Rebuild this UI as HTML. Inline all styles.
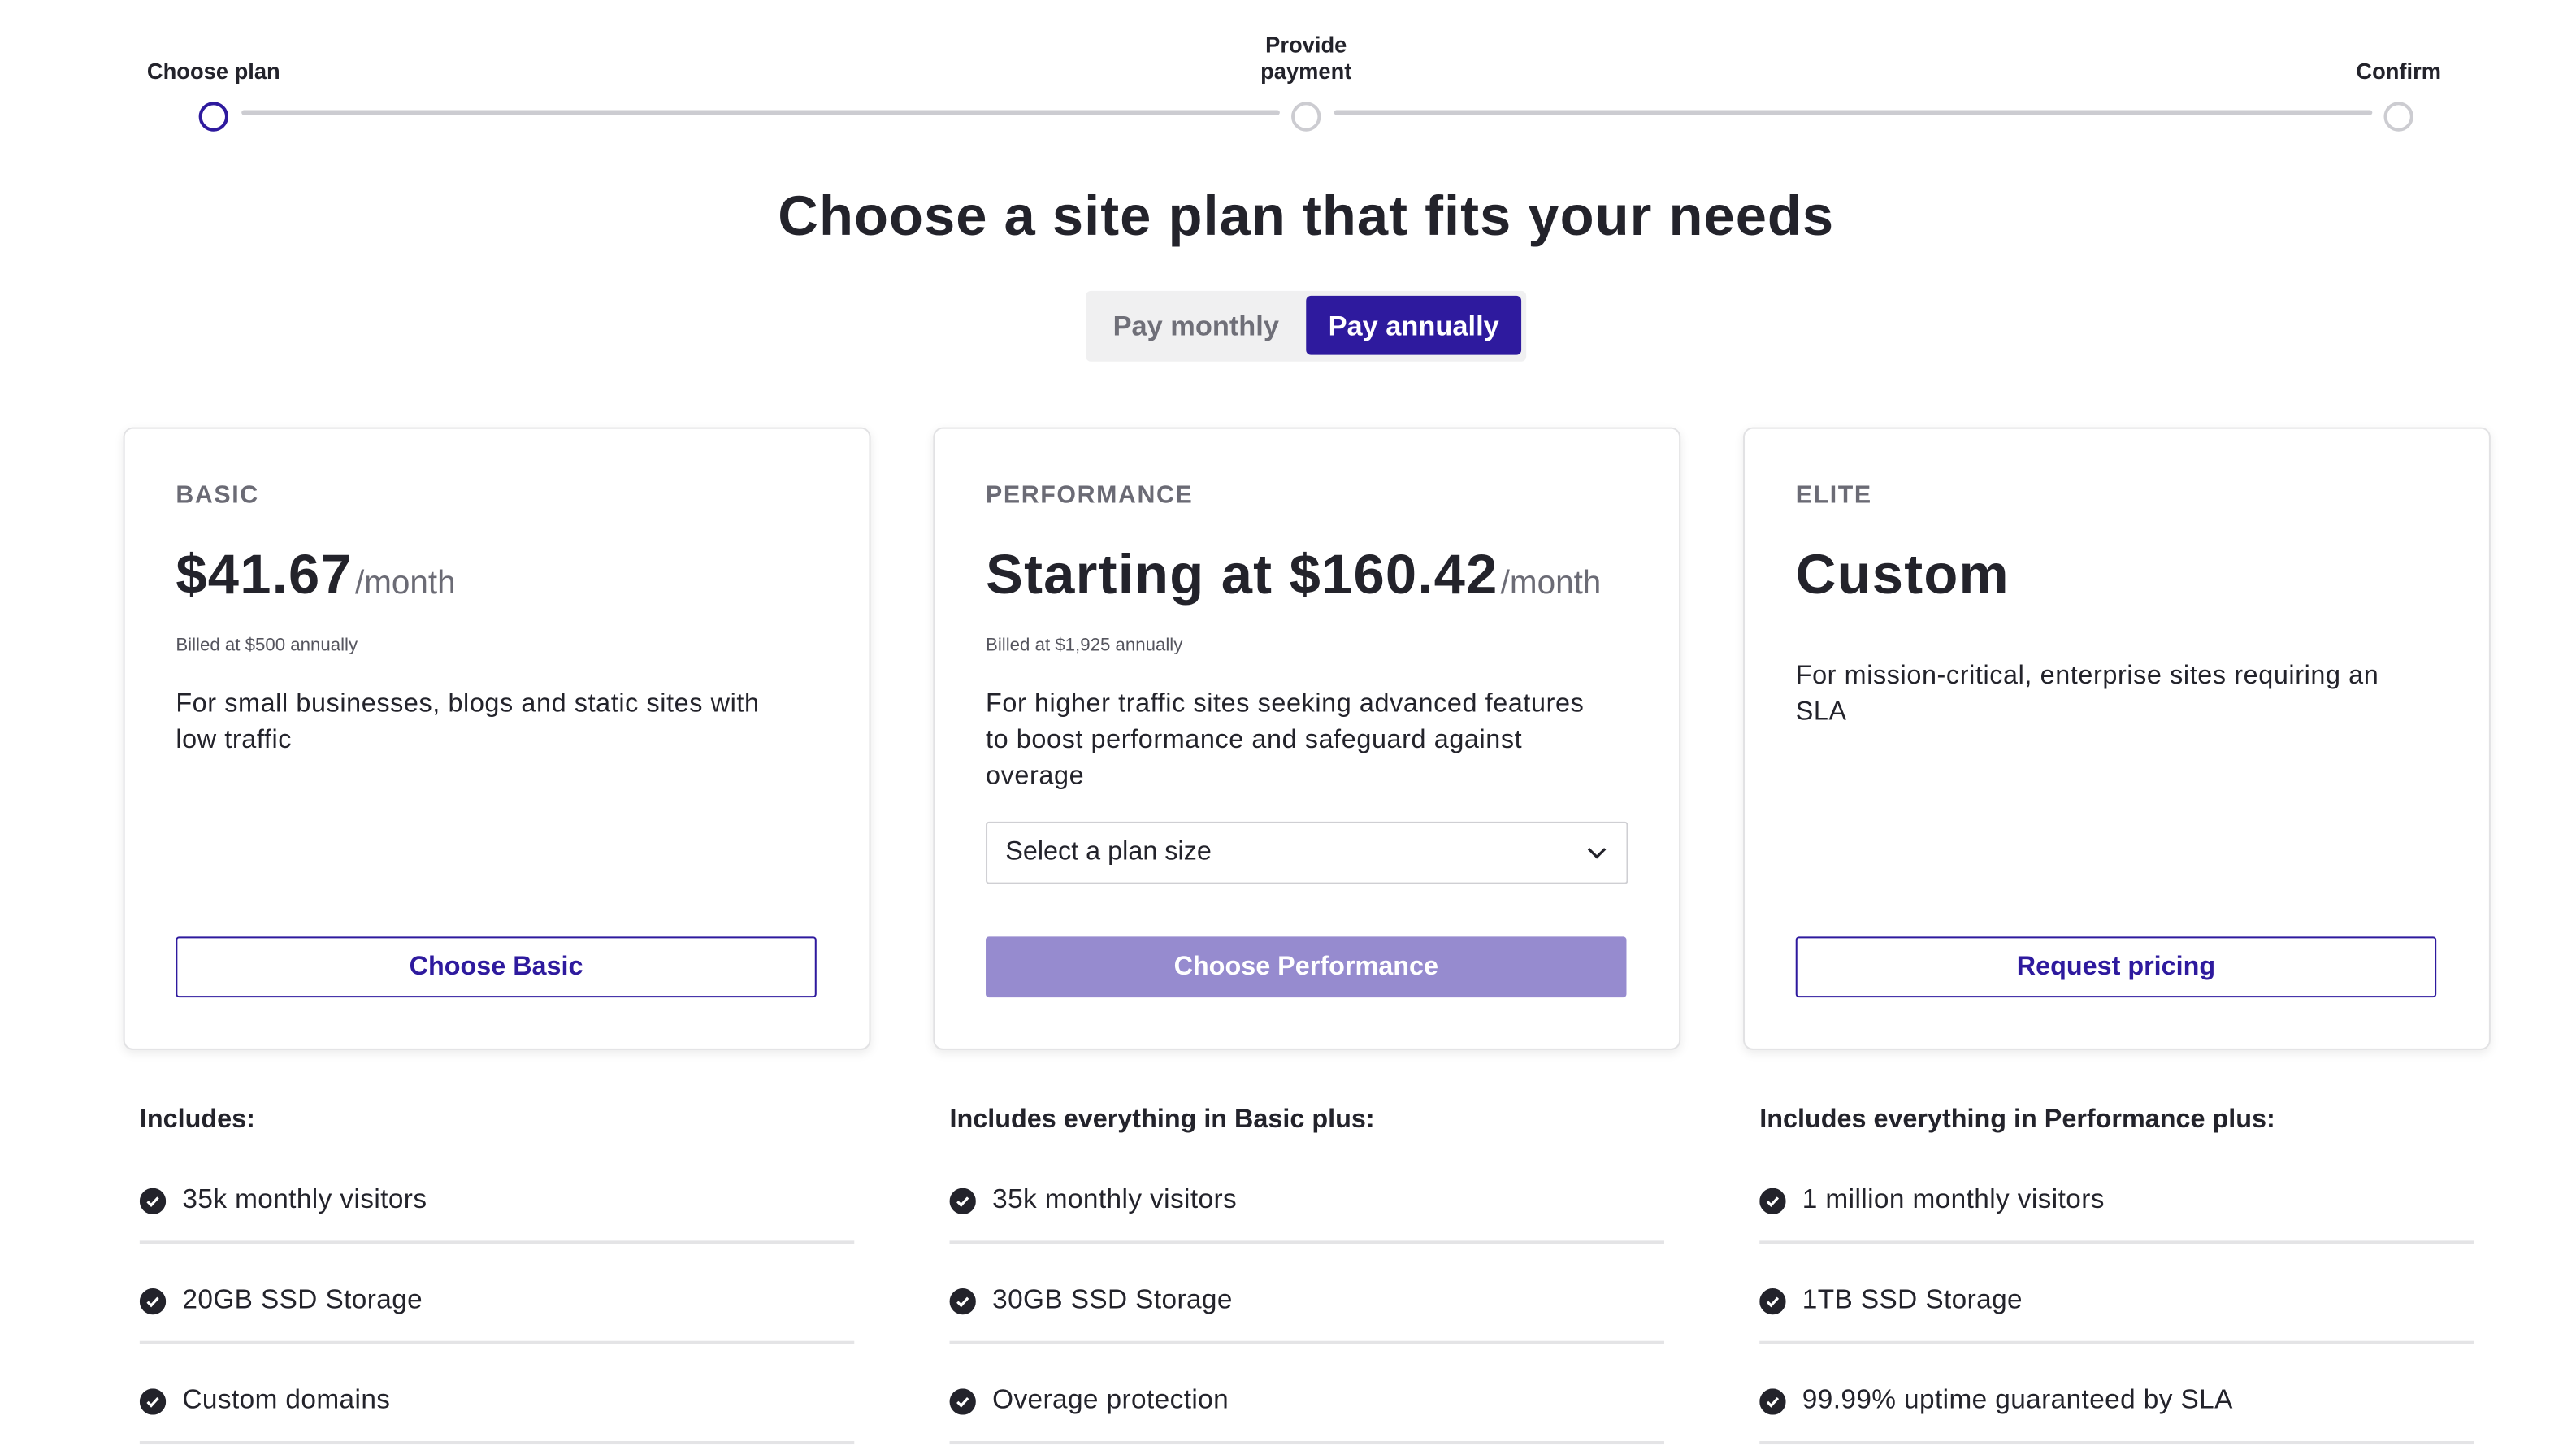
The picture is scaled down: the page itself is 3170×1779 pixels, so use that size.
<!DOCTYPE html>
<html><head><meta charset="utf-8"><style>
html,body{margin:0;padding:0;background:#fff;width:3170px;height:1778px;overflow:hidden}
#w{position:absolute;left:0;top:0;width:1568px;height:880px;transform:scale(2.0217);transform-origin:0 0;font-family:"Liberation Sans",sans-serif;color:#23232b}
.a{position:absolute;white-space:nowrap}
.lbl{font-size:13.5px;font-weight:bold;text-align:center;line-height:16px}
.circ{position:absolute;width:14px;height:14px;border-radius:50%;border:2.5px solid #ccccd1;background:#fff}
.line{position:absolute;height:3px;background:#ccccd1;border-radius:2px;top:67px}
.card{position:absolute;top:260px;width:453px;height:377px;border:1.5px solid #e2e2e4;border-radius:6px;box-shadow:0 2px 6px rgba(0,0,0,.08);background:#fff}
.tier{position:absolute;left:31px;top:32px;font-size:15px;font-weight:bold;color:#6b6b75;letter-spacing:.8px}
.price{position:absolute;left:31px;top:70px;font-size:34px;font-weight:bold;white-space:nowrap;letter-spacing:.6px}
.price span{font-size:20px;font-weight:normal;color:#6b6b75;letter-spacing:0;margin-left:-4px}
.bill{position:absolute;left:31px;top:126px;font-size:11px;color:#55555e}
.desc{position:absolute;left:31px;width:420px;font-size:16px;line-height:22px;letter-spacing:.3px;white-space:nowrap}
.btn{position:absolute;left:31px;top:309px;width:388px;height:35px;border:1.5px solid #2e1a9e;border-radius:2px;color:#2e1a9e;font-weight:bold;font-size:16px;text-align:center;line-height:35px}
.inc{position:absolute;top:673px;font-size:16px;font-weight:bold}
.item{position:absolute;width:435px;height:61px;border-bottom:2px solid #e4e4e6;font-size:16.5px;letter-spacing:.2px}
.item svg{position:absolute;left:0;top:29px}
.item span{position:absolute;left:26px;top:27px}
</style></head><body><div id="w">
<div class="a lbl" style="left:70px;top:36px;width:120px">Choose plan</div>
<div class="a lbl" style="left:735px;top:20px;width:120px">Provide<br>payment</div>
<div class="a lbl" style="left:1400px;top:36px;width:120px">Confirm</div>
<div class="line" style="left:147px;width:632px"></div>
<div class="line" style="left:812px;width:632px"></div>
<div class="circ" style="left:120.5px;top:62px;border-color:#2e1a9e"></div>
<div class="circ" style="left:785.5px;top:62px"></div>
<div class="circ" style="left:1450.5px;top:62px"></div>
<div class="a" style="left:0;width:1590px;text-align:center;top:113px;font-size:34px;font-weight:bold;letter-spacing:.5px">Choose a site plan that fits your needs</div>
<div class="a" style="left:661px;top:177px;width:268px;height:43px;background:#f0f0f1;border-radius:3px"></div>
<div class="a" style="left:661px;top:177px;width:134px;height:43px;line-height:43px;text-align:center;color:#6f6f78;font-size:17px;font-weight:bold">Pay monthly</div>
<div class="a" style="left:795px;top:180px;width:131px;height:36px;line-height:37px;text-align:center;background:#2e1a9e;border-radius:3px;color:#fff;font-size:17px;font-weight:bold">Pay annually</div>

<div class="card" style="left:75px">
<div class="tier">BASIC</div>
<div class="price">$41.67<span> /month</span></div>
<div class="bill">Billed at $500 annually</div>
<div class="desc" style="top:157px">For small businesses, blogs and static sites with<br>low traffic</div>
<div class="btn">Choose Basic</div>
</div>
<div class="card" style="left:568px">
<div class="tier">PERFORMANCE</div>
<div class="price">Starting at $160.42<span> /month</span></div>
<div class="bill">Billed at $1,925 annually</div>
<div class="desc" style="top:157px">For higher traffic sites seeking advanced features<br>to boost performance and safeguard against<br>overage</div>
<div class="a" style="left:31px;top:239px;width:389px;height:36px;border:1.5px solid #cfcfd3;border-radius:2px;font-size:16px;line-height:36px;text-indent:11px">Select a plan size
<svg style="position:absolute;right:12px;top:14px" width="12" height="8" viewBox="0 0 12 8"><path d="M1 1.5l5 5 5-5" fill="none" stroke="#23232b" stroke-width="1.6"/></svg></div>
<div class="btn" style="background:#968bcf;border-color:#968bcf;color:#fff">Choose Performance</div>
</div>
<div class="card" style="left:1061px">
<div class="tier">ELITE</div>
<div class="price">Custom</div>
<div class="desc" style="top:140px">For mission-critical, enterprise sites requiring an<br>SLA</div>
<div class="btn">Request pricing</div>
</div>

<div class="inc" style="left:85px">Includes:</div>
<div class="inc" style="left:578px">Includes everything in Basic plus:</div>
<div class="inc" style="left:1071px">Includes everything in Performance plus:</div>

<div class="item" style="left:85px;top:694px"><svg width="16" height="16"><circle cx="8" cy="8" r="8" fill="#23232b"/><path d="M4.8 8.2l2.2 2.2 4.2-4.6" fill="none" stroke="#fff" stroke-width="1.6"/></svg><span>35k monthly visitors</span></div>
<div class="item" style="left:85px;top:755px"><svg width="16" height="16"><circle cx="8" cy="8" r="8" fill="#23232b"/><path d="M4.8 8.2l2.2 2.2 4.2-4.6" fill="none" stroke="#fff" stroke-width="1.6"/></svg><span>20GB SSD Storage</span></div>
<div class="item" style="left:85px;top:816px"><svg width="16" height="16"><circle cx="8" cy="8" r="8" fill="#23232b"/><path d="M4.8 8.2l2.2 2.2 4.2-4.6" fill="none" stroke="#fff" stroke-width="1.6"/></svg><span>Custom domains</span></div>
<div class="item" style="left:578px;top:694px"><svg width="16" height="16"><circle cx="8" cy="8" r="8" fill="#23232b"/><path d="M4.8 8.2l2.2 2.2 4.2-4.6" fill="none" stroke="#fff" stroke-width="1.6"/></svg><span>35k monthly visitors</span></div>
<div class="item" style="left:578px;top:755px"><svg width="16" height="16"><circle cx="8" cy="8" r="8" fill="#23232b"/><path d="M4.8 8.2l2.2 2.2 4.2-4.6" fill="none" stroke="#fff" stroke-width="1.6"/></svg><span>30GB SSD Storage</span></div>
<div class="item" style="left:578px;top:816px"><svg width="16" height="16"><circle cx="8" cy="8" r="8" fill="#23232b"/><path d="M4.8 8.2l2.2 2.2 4.2-4.6" fill="none" stroke="#fff" stroke-width="1.6"/></svg><span>Overage protection</span></div>
<div class="item" style="left:1071px;top:694px"><svg width="16" height="16"><circle cx="8" cy="8" r="8" fill="#23232b"/><path d="M4.8 8.2l2.2 2.2 4.2-4.6" fill="none" stroke="#fff" stroke-width="1.6"/></svg><span>1 million monthly visitors</span></div>
<div class="item" style="left:1071px;top:755px"><svg width="16" height="16"><circle cx="8" cy="8" r="8" fill="#23232b"/><path d="M4.8 8.2l2.2 2.2 4.2-4.6" fill="none" stroke="#fff" stroke-width="1.6"/></svg><span>1TB SSD Storage</span></div>
<div class="item" style="left:1071px;top:816px"><svg width="16" height="16"><circle cx="8" cy="8" r="8" fill="#23232b"/><path d="M4.8 8.2l2.2 2.2 4.2-4.6" fill="none" stroke="#fff" stroke-width="1.6"/></svg><span>99.99% uptime guaranteed by SLA</span></div>
</div></body></html>
